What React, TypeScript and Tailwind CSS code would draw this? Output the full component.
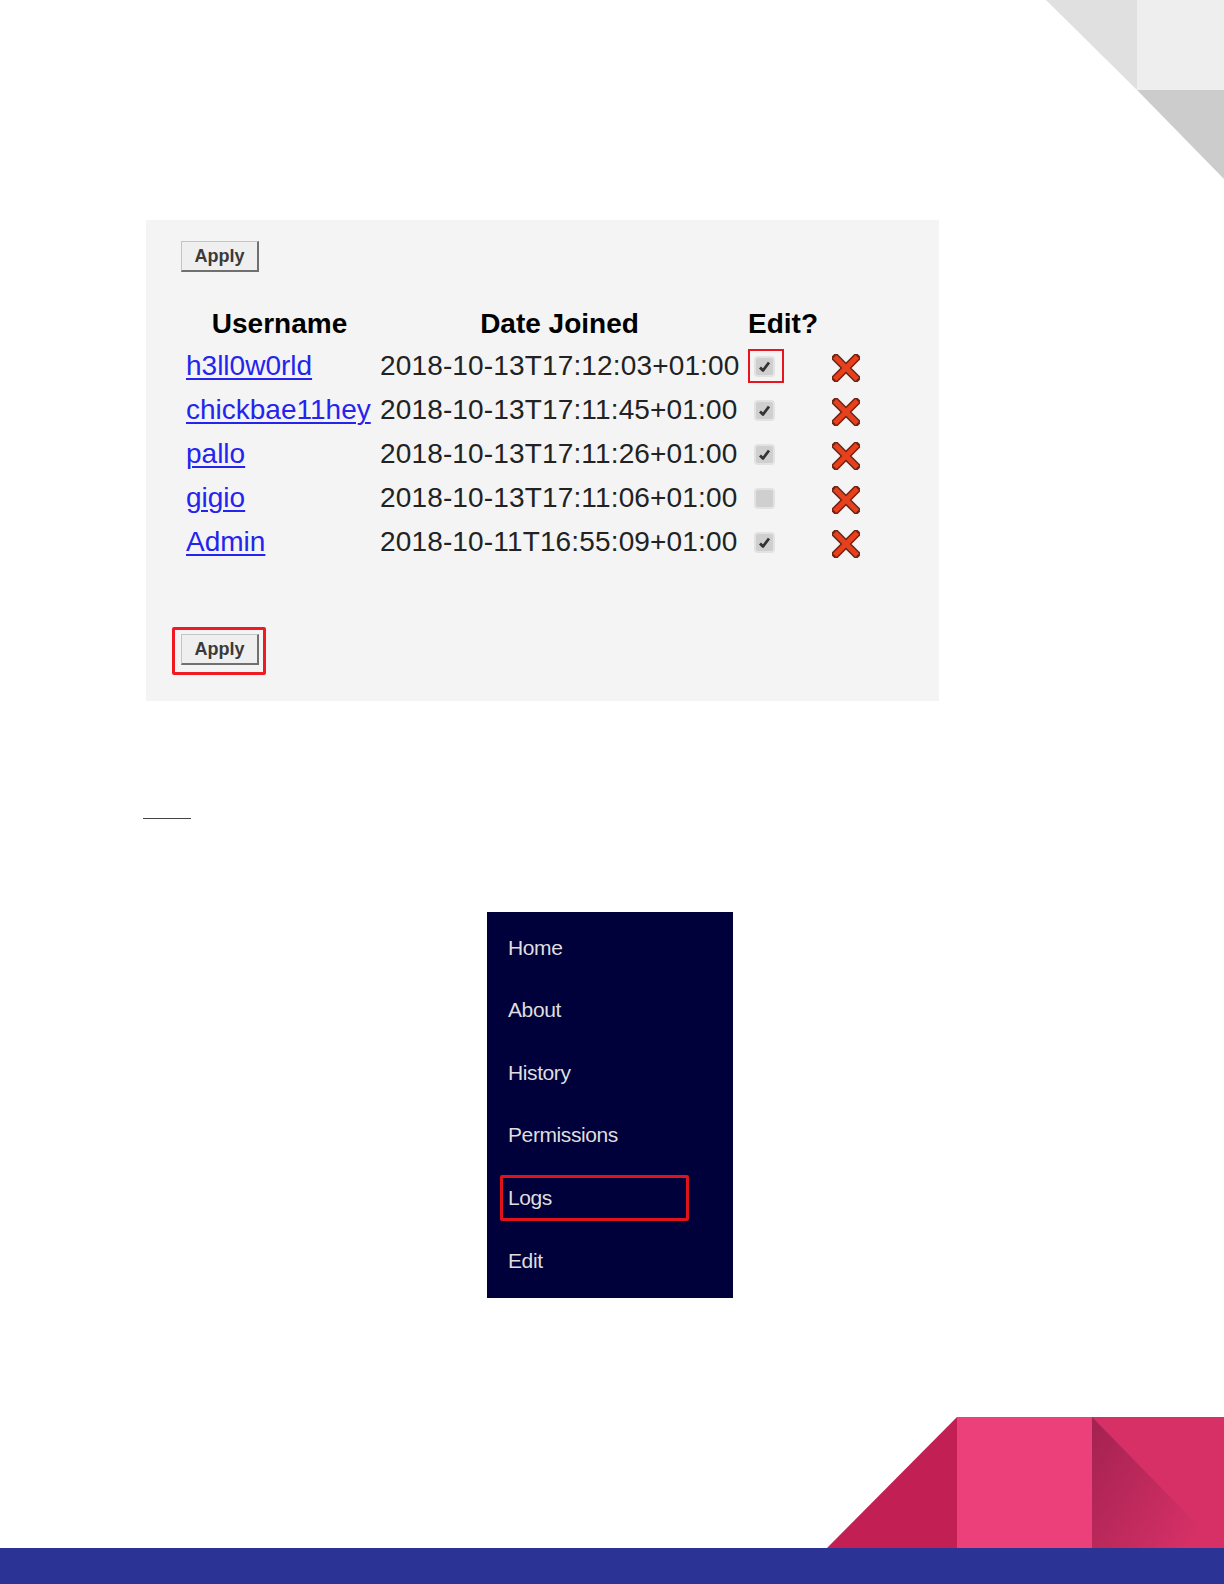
import React from "react";

const users = [
  { name: "h3ll0w0rld", joined: "2018-10-13T17:12:03+01:00", edit: true, focus: true },
  { name: "chickbae11hey", joined: "2018-10-13T17:11:45+01:00", edit: true },
  { name: "pallo", joined: "2018-10-13T17:11:26+01:00", edit: true },
  { name: "gigio", joined: "2018-10-13T17:11:06+01:00", edit: false },
  { name: "Admin", joined: "2018-10-11T16:55:09+01:00", edit: true },
];

const menu = ["Home", "About", "History", "Permissions", "Logs", "Edit"];

function ApplyButton() {
  return (
    <button className="w-[78px] h-[31px] bg-[#efefef] border border-[#c4c4c4] border-r-2 border-b-2 border-r-[#707070] border-b-[#707070] text-[18px] font-bold text-[#3a3a3a] leading-none">
      Apply
    </button>
  );
}

function Checkbox({ checked }: { checked: boolean }) {
  return (
    <div className="w-[21px] h-[21px] rounded-[4px] border-2 border-[#e2e2e2] bg-[#cfcfcf] flex items-center justify-center">
      {checked && (
        <svg width="13" height="13" viewBox="0 0 13 13">
          <path d="M2 7.5 L5 10.5 L11 2.5" fill="none" stroke="#333" strokeWidth="2.8" strokeLinejoin="round" />
        </svg>
      )}
    </div>
  );
}

function DeleteIcon() {
  return (
    <svg width="28" height="28" viewBox="0 0 28 28">
      <path d="M4 4 L24 24 M24 4 L4 24" stroke="#6e2414" strokeWidth="8" strokeLinecap="square" />
      <path d="M4.5 4.5 L23.5 23.5 M23.5 4.5 L4.5 23.5" stroke="#e8401c" strokeWidth="5" strokeLinecap="square" />
    </svg>
  );
}

export default function App() {
  return (
    <div className="relative w-[1224px] h-[1584px] bg-white overflow-hidden" style={{ fontFamily: '"Liberation Sans", Arial, sans-serif' }}>
      {/* top right corner decoration */}
      <svg className="absolute top-0 right-0" width="194" height="182" viewBox="0 0 194 182">
        <polygon points="16,0 107,0 107,90" fill="#e0e0e0" />
        <rect x="107" y="0" width="87" height="90" fill="#eeeeee" />
        <polygon points="107,90 194,90 194,179" fill="#cccccc" />
      </svg>

      <div className="flex flex-col">
        <div className="mt-[220px] ml-[146px] w-[793px] bg-[#f4f4f4] pl-[35px] pt-[21px] pb-[26px]">
          <ApplyButton />

          <div className="mt-[32px] ml-[5px] grid grid-cols-[194px_368px_84px_40px] items-center text-[28px]">
            <div className="h-[40px] w-[187px] flex items-center justify-center font-bold text-black">Username</div>
            <div className="h-[40px] w-[359px] flex items-center justify-center font-bold text-black">Date Joined</div>
            <div className="h-[40px] w-[70px] flex items-center justify-center font-bold text-black">Edit?</div>
            <div className="h-[40px]" />
            {users.map((u) => (
              <React.Fragment key={u.name}>
                <div className="h-[44px] flex items-center">
                  <a href="#" className="text-[#2424ee] underline underline-offset-[3px] decoration-2">
                    {u.name}
                  </a>
                </div>
                <div className="h-[44px] flex items-center text-[#222] tracking-[0.15px]">{u.joined}</div>
                <div className="h-[44px] flex items-center">
                  <div
                    className={
                      u.focus
                        ? "w-[36px] h-[34px] border-2 border-[#e8141e] pl-[4px] flex items-center"
                        : "w-[36px] h-[34px] border-2 border-transparent pl-[4px] flex items-center"
                    }
                  >
                    <Checkbox checked={u.edit} />
                  </div>
                </div>
                <div className="h-[44px] flex items-center pt-[4px]">
                  <DeleteIcon />
                </div>
              </React.Fragment>
            ))}
          </div>

          <div className="mt-[63px] -ml-[9px] w-[94px] h-[48px] border-[3px] border-[#f01a22] rounded-[2px] pl-[6px] pt-[4px]">
            <ApplyButton />
          </div>
        </div>

        <div className="mt-[117px] ml-[143px] w-[48px] h-px bg-[#444]" />

        <nav className="mt-[93px] ml-[487px] w-[246px] bg-[#00003b] pt-[4px] pb-[6px]">
          {menu.map((m) =>
            m === "Logs" ? (
              <div key={m} className="h-[62.6px] flex items-center">
                <div className="ml-[13px] w-[189px] h-[46px] border-[3px] border-[#e0121c] rounded-[2px] pl-[5px] flex items-center text-[21px] tracking-[-0.4px] text-[#dedede]">
                  {m}
                </div>
              </div>
            ) : (
              <div key={m} className="h-[62.6px] flex items-center pl-[21px] text-[21px] tracking-[-0.4px] text-[#dedede]">
                {m}
              </div>
            )
          )}
        </nav>
      </div>

      {/* bottom decoration */}
      <svg className="absolute right-0 bottom-[36px]" width="424" height="132" viewBox="0 0 424 132">
        <defs>
          <linearGradient id="shade" x1="0" y1="0" x2="1" y2="0.6">
            <stop offset="0" stopColor="#a32250" />
            <stop offset="1" stopColor="#d63067" />
          </linearGradient>
        </defs>
        <polygon points="27,132 157,1 157,132" fill="#c21f55" />
        <rect x="157" y="1" width="135" height="131" fill="#ec407a" />
        <rect x="292" y="1" width="132" height="131" fill="#d63067" />
        <polygon points="292,1 420,132 292,132" fill="url(#shade)" />
      </svg>
      <div className="absolute left-0 right-0 bottom-0 h-[36px] bg-[#2b3494]" />
    </div>
  );
}
